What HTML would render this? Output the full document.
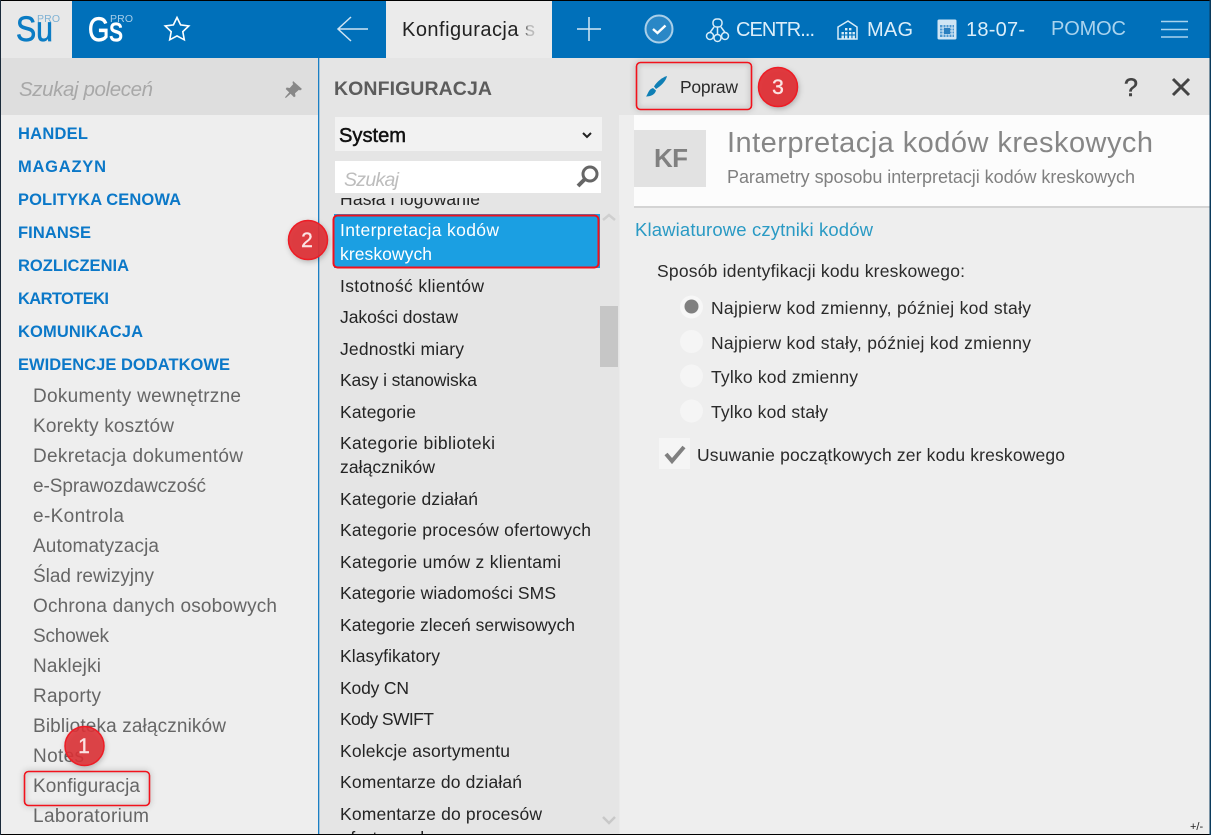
<!DOCTYPE html>
<html lang="pl"><head><meta charset="utf-8"><title>Konfiguracja</title>
<style>
html,body{margin:0;padding:0;width:1211px;height:835px;overflow:hidden;background:#eee}
svg{display:block;position:absolute;left:0;top:0}
text{font-family:"Liberation Sans",Arial,sans-serif}
.s{font-size:19px;fill:#666}
.h{font-size:16.5px;font-weight:bold;fill:#0b78c8}
.m{font-size:17.5px;fill:#242424}
.r{font-size:17.5px;fill:#2a2a2a}
.w{fill:none;stroke:#fff}
</style></head><body>
<svg width="1211" height="835" viewBox="0 0 1211 835" xmlns="http://www.w3.org/2000/svg">
<defs>
<filter id="b" x="-20%" y="-30%" width="140%" height="160%"><feGaussianBlur stdDeviation="3"/></filter>
<clipPath id="listclip"><rect x="319" y="198" width="281" height="636"/></clipPath>
<linearGradient id="tabfade" x1="0" x2="1" y1="0" y2="0"><stop offset="0" stop-color="#222"/><stop offset=".92" stop-color="#222"/><stop offset=".95" stop-color="#bbb"/><stop offset="1" stop-color="#bbb"/></linearGradient>
</defs>

<!-- base -->
<rect width="1211" height="835" fill="#eee"/>
<!-- top bar -->
<rect x="0" y="1" width="1211" height="57" fill="#0070ba"/>
<rect x="0" y="1" width="72" height="57" fill="#e8e8e8"/>
<rect x="386" y="1" width="166" height="57" fill="#ebebeb"/>
<!-- sidebar search -->
<rect x="0" y="58" width="318" height="57" fill="#dedede"/>
<rect x="318" y="58" width="1.4" height="776" fill="#1a7fc4"/>
<!-- middle column -->
<rect x="319.4" y="58" width="300" height="776" fill="#e5e5e5"/>
<!-- toolbar -->
<rect x="619" y="58" width="592" height="57" fill="#e5e5e5"/>
<!-- header -->
<rect x="619" y="115" width="592" height="100" fill="#eee"/>
<rect x="634" y="115" width="576" height="91" fill="#fcfcfc"/>
<rect x="634" y="206" width="576" height="2" fill="#d4d4d4"/>
<rect x="634" y="130" width="72" height="57" fill="#e2e2e2"/>

<!-- logos -->
<text x="16" y="41" font-size="35" fill="#0b7cc4" stroke="#0b7cc4" stroke-width=".7" textLength="37" lengthAdjust="spacingAndGlyphs">Su</text>
<text x="37" y="22" font-size="10.5" fill="#7fb2d4" textLength="23">PRO</text>
<text x="88" y="41" font-size="34" fill="#fff" stroke="#fff" stroke-width=".8" textLength="35" lengthAdjust="spacingAndGlyphs">Gs</text>
<text x="110" y="22" font-size="10.5" fill="#a5cde9" textLength="23">PRO</text>
<path d="M177 17.5l3.6 7.4 8.2 1.1-6 5.700 1.500 8.100-7.300-3.900-7.300 3.900 1.500-8.100-6-5.700 8.200-1.100z" class="w" stroke-width="1.6"/>

<!-- nav icons -->
<path d="M368 29H338M351 17L338 29L351 41" fill="none" stroke="#cfe4f3" stroke-width="1.5"/>
<text x="402" y="36" font-size="20" fill="url(#tabfade)" textLength="133">Konfiguracja s</text>
<path d="M589 17V41M577 29H601" fill="none" stroke="#d4e8f5" stroke-width="1.5"/>
<circle cx="659" cy="29" r="13.5" fill="#2a87c6" stroke="#a9cfe9" stroke-width="2"/>
<path d="M653 29l4.500 4 8-7.500" fill="none" stroke="#fff" stroke-width="2.4"/>
<g fill="none" stroke="#d8ecf8" stroke-width="1.5">
<rect x="713" y="19" width="9" height="8" rx="3.5"/><circle cx="710" cy="36" r="3.500"/><circle cx="717.500" cy="38" r="3.500"/><circle cx="725" cy="36" r="3.500"/><path d="M717.500 27v7.500M714 27l-4 5.500M721 27l4 5.500"/>
<path d="M838 39V27l10-6 9 6v12zM838 39h19"/>
</g>
<g fill="#d8ecf8"><rect x="845" y="28" width="2.4" height="2.4"/><rect x="849" y="28" width="2.4" height="2.4"/><rect x="841.5" y="32" width="2.4" height="2.4"/><rect x="845" y="32" width="2.4" height="2.4"/><rect x="849" y="32" width="2.4" height="2.4"/><rect x="852.5" y="32" width="2.4" height="2.4"/><rect x="841.5" y="35.5" width="2.4" height="3"/><rect x="845" y="35.5" width="2.4" height="3"/><rect x="849" y="35.5" width="2.4" height="3"/><rect x="852.5" y="35.5" width="2.4" height="3"/></g>
<text x="736" y="36" font-size="20" fill="#dceef9" textLength="79">CENTR...</text>
<text x="867" y="36" font-size="20" fill="#dceef9" textLength="46">MAG</text>
<rect x="937.5" y="19.5" width="19" height="20" rx="1.500" fill="#cfe5f4"/>
<rect x="940" y="25" width="14" height="12" fill="#4d97d0"/>
<path d="M940 28h14M940 31h14M940 34h14M943 25v12M946 25v12M949 25v12M952 25v12" stroke="#d5e8f5" stroke-width="1" fill="none"/>
<rect x="944" y="28" width="6" height="6" fill="#2a7fbf"/>
<text x="966" y="36" font-size="20" fill="#dceef9" textLength="59">18-07-</text>
<text x="1051" y="35" font-size="20" fill="#a9d3ee" textLength="75">POMOC</text>
<path d="M1161 21.500H1188M1161 29.500H1188M1161 37H1188" stroke="#a9d3ee" stroke-width="1.6" fill="none"/>

<!-- sidebar -->
<text x="19" y="96" font-size="20.5" font-style="italic" fill="#a8a8a8" textLength="134">Szukaj poleceń</text>
<path d="M293 81l9 8-2 1.500-1-.8-4 3.600.5 3-1.500 1-3.400-3.500-4.800 4.200-.8-.8 4.200-4.800-3.500-3.400 1-1.500 3 .5 3.600-4-.8-1z" fill="#888"/>

<text class="h" x="18" y="139" textLength="70">HANDEL</text>
<text class="h" x="18" y="172" textLength="88">MAGAZYN</text>
<text class="h" x="18" y="205" textLength="163">POLITYKA CENOWA</text>
<text class="h" x="18" y="238" textLength="73">FINANSE</text>
<text class="h" x="18" y="271" textLength="111">ROZLICZENIA</text>
<text class="h" x="18" y="304" textLength="91">KARTOTEKI</text>
<text class="h" x="18" y="337" textLength="125">KOMUNIKACJA</text>
<text class="h" x="18" y="370" textLength="212">EWIDENCJE DODATKOWE</text>

<text class="s" x="33" y="402" textLength="208">Dokumenty wewnętrzne</text>
<text class="s" x="33" y="432" textLength="141">Korekty kosztów</text>
<text class="s" x="33" y="462" textLength="210">Dekretacja dokumentów</text>
<text class="s" x="33" y="492" textLength="173">e-Sprawozdawczość</text>
<text class="s" x="33" y="522" textLength="91">e-Kontrola</text>
<text class="s" x="33" y="552" textLength="126">Automatyzacja</text>
<text class="s" x="33" y="582" textLength="121">Ślad rewizyjny</text>
<text class="s" x="33" y="612" textLength="244">Ochrona danych osobowych</text>
<text class="s" x="33" y="642" textLength="76">Schowek</text>
<text class="s" x="33" y="672" textLength="68">Naklejki</text>
<text class="s" x="33" y="702" textLength="68">Raporty</text>
<text class="s" x="33" y="732" textLength="193">Biblioteka załączników</text>
<text class="s" x="33" y="762" textLength="51">Notes</text>
<text class="s" x="33" y="792" textLength="107">Konfiguracja</text>
<text class="s" x="33" y="822" textLength="116">Laboratorium</text>

<!-- middle -->
<text x="334" y="95" font-size="19.500" font-weight="bold" fill="#5c5c5c" textLength="158">KONFIGURACJA</text>
<rect x="335" y="117" width="267" height="34" fill="#f2f2f2"/>
<text x="339" y="142" font-size="20" fill="#111" stroke="#111" stroke-width=".5" textLength="67" lengthAdjust="spacingAndGlyphs">System</text>
<path d="M583 133l4 4 4-4" fill="none" stroke="#222" stroke-width="2"/>
<rect x="335" y="161" width="266" height="32" fill="#fff"/>
<text x="344" y="186" font-size="19.5" font-style="italic" fill="#bdbdbd" textLength="55">Szukaj</text>
<circle cx="590" cy="174" r="7" fill="none" stroke="#666" stroke-width="3"/>
<path d="M585 179l-7 7" stroke="#666" stroke-width="4" fill="none"/>

<g clip-path="url(#listclip)">
<text class="m" x="340" y="205" textLength="140">Hasła i logowanie</text>
<text class="m" x="340" y="292" textLength="144">Istotność klientów</text>
<text class="m" x="340" y="323" textLength="118">Jakości dostaw</text>
<text class="m" x="340" y="355" textLength="124">Jednostki miary</text>
<text class="m" x="340" y="386" textLength="137">Kasy i stanowiska</text>
<text class="m" x="340" y="418" textLength="76">Kategorie</text>
<text class="m" x="340" y="449" textLength="155">Kategorie biblioteki</text>
<text class="m" x="340" y="473" textLength="95">załączników</text>
<text class="m" x="340" y="505" textLength="138">Kategorie działań</text>
<text class="m" x="340" y="536" textLength="251">Kategorie procesów ofertowych</text>
<text class="m" x="340" y="568" textLength="221">Kategorie umów z klientami</text>
<text class="m" x="340" y="599" textLength="216">Kategorie wiadomości SMS</text>
<text class="m" x="340" y="631" textLength="235">Kategorie zleceń serwisowych</text>
<text class="m" x="340" y="662" textLength="100">Klasyfikatory</text>
<text class="m" x="340" y="694" textLength="69">Kody CN</text>
<text class="m" x="340" y="725" textLength="94">Kody SWIFT</text>
<text class="m" x="340" y="757" textLength="170">Kolekcje asortymentu</text>
<text class="m" x="340" y="788" textLength="182">Komentarze do działań</text>
<text class="m" x="340" y="820" textLength="202">Komentarze do procesów</text>
<text class="m" x="340" y="844" textLength="90">ofertowych</text>
</g>
<rect x="334" y="214" width="266" height="54" fill="#1b9fe2"/>
<text x="340" y="236" font-size="17.500" fill="#fff" textLength="159">Interpretacja kodów</text>
<text x="340" y="260" font-size="17.500" fill="#fff" textLength="92">kreskowych</text>
<rect x="600" y="306" width="18" height="61" fill="#c6c6c6"/>
<path d="M603 220l6-5 6 5" fill="none" stroke="#cfcfcf" stroke-width="2.5"/>
<path d="M603 817l6 6 6-6" fill="none" stroke="#c8c8c8" stroke-width="2.5"/>

<!-- toolbar -->
<path d="M667 76c-1 5-6 10-11 13l-2-2.500c3-5 8-9 13-10.500z" fill="#0f7fb5"/>
<path d="M653 88l3 2.500c-1 4-5 6-10 6 2-2 2-7 7-8.500z" fill="#0f7fb5"/>
<text class="r" x="680" y="93" textLength="58">Popraw</text>
<text x="1124" y="96" font-size="25" fill="#444" stroke="#444" stroke-width=".6" textLength="14">?</text>
<path d="M1173 79l16 16M1189 79l-16 16" stroke="#444" stroke-width="3" fill="none"/>

<!-- header text -->
<text x="654" y="167" font-size="26" font-weight="bold" fill="#808080" textLength="34">KF</text>
<text x="727" y="152" font-size="29" fill="#868686" textLength="426">Interpretacja kodów kreskowych</text>
<text x="727" y="183" font-size="18" fill="#808080" textLength="408">Parametry sposobu interpretacji kodów kreskowych</text>

<!-- content -->
<text x="635" y="236" font-size="18.500" fill="#2a9ac4" textLength="238">Klawiaturowe czytniki kodów</text>
<text class="r" x="657" y="277" textLength="308">Sposób identyfikacji kodu kreskowego:</text>
<circle cx="691.500" cy="307" r="11.500" fill="#f7f7f7"/><circle cx="691.500" cy="306.500" r="7" fill="#808080"/>
<circle cx="691.500" cy="341.500" r="11.500" fill="#f5f5f5"/>
<circle cx="691.500" cy="376" r="11.500" fill="#f5f5f5"/>
<circle cx="691.500" cy="411" r="11.500" fill="#f5f5f5"/>
<text class="r" x="711" y="314" textLength="320">Najpierw kod zmienny, później kod stały</text>
<text class="r" x="711" y="349" textLength="320">Najpierw kod stały, później kod zmienny</text>
<text class="r" x="711" y="383" textLength="147">Tylko kod zmienny</text>
<text class="r" x="711" y="418" textLength="117">Tylko kod stały</text>
<rect x="659" y="438" width="31" height="31" fill="#f5f5f5"/>
<path d="M666 454l6 7 12-14" fill="none" stroke="#808080" stroke-width="4"/>
<text class="r" x="697" y="461" textLength="368">Usuwanie początkowych zer kodu kreskowego</text>
<text x="1190" y="830" font-size="11" fill="#222">+/-</text>

<!-- annotation boxes -->
<g fill="none">
<rect x="636.500" y="62.500" width="115" height="47" rx="4" stroke="#000" stroke-opacity=".2" stroke-width="3" filter="url(#b)"/>
<rect x="24.500" y="771.500" width="125" height="34" rx="4" stroke="#000" stroke-opacity=".2" stroke-width="3" filter="url(#b)"/>
<rect x="636.500" y="62.500" width="115" height="47" rx="4" stroke="#f2121c" stroke-width="1.600"/>
<rect x="333.500" y="215.500" width="265" height="52" rx="4" stroke="#f0101c" stroke-width="2"/>
<rect x="24.500" y="771.500" width="125" height="34" rx="4" stroke="#f2121c" stroke-width="1.600"/>
</g>
<!-- badges -->
<g>
<circle cx="779" cy="89" r="20" fill="#000" fill-opacity=".25" filter="url(#b)"/>
<circle cx="778" cy="87" r="19.500" fill="#e03237" fill-opacity=".95" stroke="#ee1c25" stroke-width="1.500"/>
<text x="778" y="94" font-size="21" fill="#fbe3e3" stroke="#fbe3e3" stroke-width=".4" text-anchor="middle">3</text>
<circle cx="309" cy="242" r="20" fill="#000" fill-opacity=".25" filter="url(#b)"/>
<circle cx="308" cy="240" r="19.500" fill="#e03237" fill-opacity=".93" stroke="#ee1c25" stroke-width="1.500"/>
<text x="307" y="247" font-size="21" fill="#fbe3e3" stroke="#fbe3e3" stroke-width=".4" text-anchor="middle">2</text>
<circle cx="85" cy="748" r="20" fill="#000" fill-opacity=".25" filter="url(#b)"/>
<circle cx="84.500" cy="746" r="19.500" fill="#e03237" fill-opacity=".88" stroke="#ee1c25" stroke-width="1.500"/>
<text x="84" y="753" font-size="21" fill="#fbe3e3" stroke="#fbe3e3" stroke-width=".4" text-anchor="middle">1</text>
</g>

<!-- window frame -->
<rect x="0" y="0" width="1211" height="1" fill="#000"/>
<rect x="0" y="834" width="1211" height="1" fill="#000"/>
<rect x="0" y="0" width="1" height="835" fill="#1a2a3a"/>
<rect x="1209.500" y="0" width="1.500" height="835" fill="#0b3a5c"/>
</svg>
</body></html>
